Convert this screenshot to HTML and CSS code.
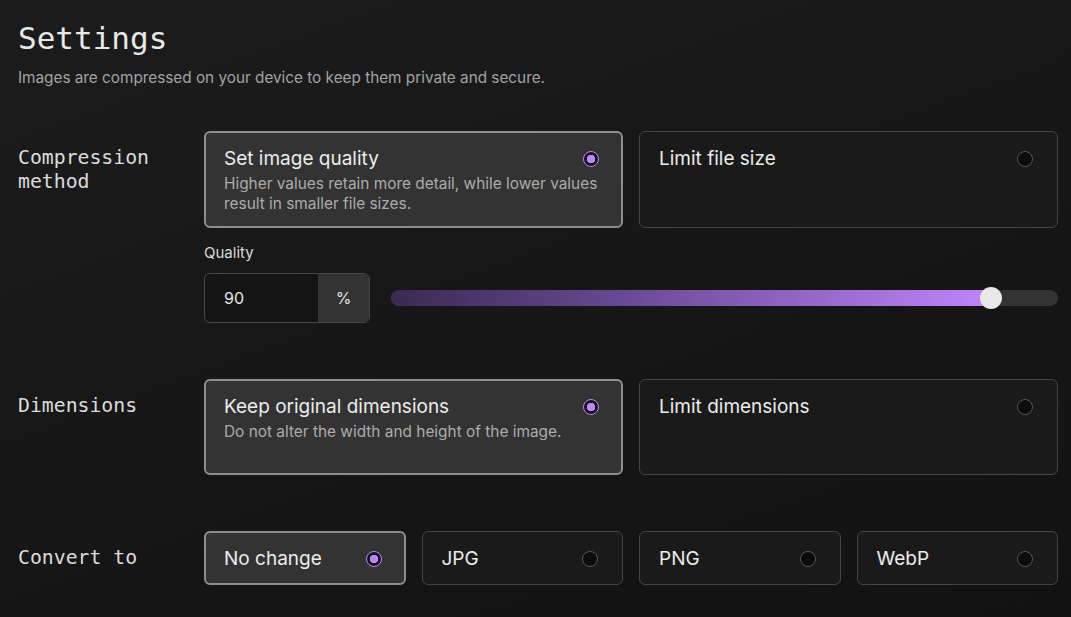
FILE: index.html
```html
<!DOCTYPE html>
<html lang="en">
<head>
    <meta charset="UTF-8">
    <meta name="viewport" content="width=device-width, initial-scale=1.0">
    <title>Settings</title>
    <link rel="stylesheet" href="styles.css">
</head>
<body>
    <div class="page">
        <h1>Settings</h1>
        <p class="intro">Images are compressed on your device to keep them private and secure.</p>

        <section class="row">
            <div class="row-label">Compression<br>method</div>
            <div class="row-body">
                <div class="choices two">
                    <div class="choice selected">
                        <div class="choice-head">
                            <span class="choice-title">Set image quality</span>
                            <span class="radio"></span>
                        </div>
                        <p class="choice-desc">Higher values retain more detail, while lower values result in smaller file sizes.</p>
                    </div>
                    <div class="choice">
                        <div class="choice-head">
                            <span class="choice-title">Limit file size</span>
                            <span class="radio"></span>
                        </div>
                    </div>
                </div>

                <div class="quality">
                    <label class="field-label">Quality</label>
                    <div class="quality-row">
                        <div class="number-field">
                            <span class="number-value">90</span>
                            <span class="number-unit">%</span>
                        </div>
                        <div class="slider">
                            <div class="slider-fill" style="width: 90%"></div>
                            <div class="slider-thumb" style="left: 90%"></div>
                        </div>
                    </div>
                </div>
            </div>
        </section>

        <section class="row">
            <div class="row-label">Dimensions</div>
            <div class="row-body">
                <div class="choices two">
                    <div class="choice selected">
                        <div class="choice-head">
                            <span class="choice-title">Keep original dimensions</span>
                            <span class="radio"></span>
                        </div>
                        <p class="choice-desc">Do not alter the width and height of the image.</p>
                    </div>
                    <div class="choice">
                        <div class="choice-head">
                            <span class="choice-title">Limit dimensions</span>
                            <span class="radio"></span>
                        </div>
                    </div>
                </div>
            </div>
        </section>

        <section class="row">
            <div class="row-label">Convert to</div>
            <div class="row-body">
                <div class="choices four">
                    <div class="choice small selected">
                        <div class="choice-head">
                            <span class="choice-title">No change</span>
                            <span class="radio"></span>
                        </div>
                    </div>
                    <div class="choice small">
                        <div class="choice-head">
                            <span class="choice-title">JPG</span>
                            <span class="radio"></span>
                        </div>
                    </div>
                    <div class="choice small">
                        <div class="choice-head">
                            <span class="choice-title">PNG</span>
                            <span class="radio"></span>
                        </div>
                    </div>
                    <div class="choice small">
                        <div class="choice-head">
                            <span class="choice-title">WebP</span>
                            <span class="radio"></span>
                        </div>
                    </div>
                </div>
            </div>
        </section>
    </div>
</body>
</html>
```

FILE: styles.css
```css
* {
    box-sizing: border-box;
    margin: 0;
    padding: 0;
}

html, body {
    height: 100%;
}

body {
    font-family: 'Inter', 'Noto Sans', sans-serif;
    background: linear-gradient(160deg, #1c1c1c 0%, #161616 55%, #121212 100%);
    color: #e6e6e6;
    overflow: hidden;
}

.page {
    padding: 18px 13px 0 18px;
}

h1 {
    font-family: 'DejaVu Sans Mono', monospace;
    font-weight: 400;
    font-size: 31px;
    line-height: 40px;
    color: #e8e8e8;
}

.intro {
    margin-top: 10px;
    font-size: 15.3px;
    line-height: 20px;
    color: #a3a3a3;
}

.row {
    display: grid;
    grid-template-columns: 186px 1fr;
    margin-top: 56px;
}

.intro + .row {
    margin-top: 43px;
}

.row-label {
    font-family: 'DejaVu Sans Mono', monospace;
    font-size: 19.8px;
    line-height: 24px;
    padding-top: 15px;
    color: #dcdcdc;
}

.choices {
    display: grid;
    gap: 16px;
}

.choices.two {
    grid-template-columns: 1fr 1fr;
}

.choices.four {
    grid-template-columns: repeat(4, 1fr);
}

.choice {
    background: #1a1a1a;
    border: 1px solid #444;
    border-radius: 6px;
    padding: 15px 24px 13px 19px;
    min-height: 96px;
}

.choice.selected {
    background: #333;
    border: 2px solid #8e8e8e;
    padding: 14px 22px 12px 18px;
}

.choice.small {
    min-height: 53px;
}

.choice-head {
    display: flex;
    align-items: center;
    justify-content: space-between;
}

.choice-title {
    font-size: 19px;
    line-height: 24px;
    color: #ececec;
}

.choice-desc {
    margin-top: 3px;
    font-size: 15.4px;
    line-height: 20px;
    color: #ababab;
}

.radio {
    width: 16px;
    height: 16px;
    border-radius: 50%;
    background: #0c0c0c;
    border: 1px solid #565656;
    flex-shrink: 0;
}

.selected .radio {
    border: 1.5px solid #c084fc;
    background: radial-gradient(circle, #c084fc 0 4px, #141414 4.5px);
}

.quality {
    margin-top: 15px;
}

.field-label {
    display: block;
    font-size: 15px;
    line-height: 20px;
    color: #dadada;
}

.quality-row {
    display: flex;
    align-items: center;
    gap: 21px;
    margin-top: 10px;
}

.number-field {
    display: flex;
    width: 166px;
    height: 50px;
    border: 1px solid #464646;
    border-radius: 6px;
    overflow: hidden;
    background: #141414;
    flex-shrink: 0;
}

.number-value {
    flex: 1;
    padding-left: 19px;
    font-size: 16px;
    line-height: 48px;
    color: #e6e6e6;
}

.number-unit {
    width: 51px;
    text-align: center;
    background: #333;
    font-size: 16px;
    line-height: 48px;
    color: #e6e6e6;
}

.slider {
    flex: 1;
    position: relative;
    height: 16px;
    border-radius: 8px;
    background: #333;
}

.slider-fill {
    height: 100%;
    border-radius: 8px 0 0 8px;
    background: linear-gradient(90deg, #3b2a52 0%, #6a4a96 40%, #c084fc 100%);
}

.slider-thumb {
    position: absolute;
    top: 50%;
    width: 22px;
    height: 22px;
    margin: -11px 0 0 -11px;
    border-radius: 50%;
    background: #e8e8e8;
}
```
